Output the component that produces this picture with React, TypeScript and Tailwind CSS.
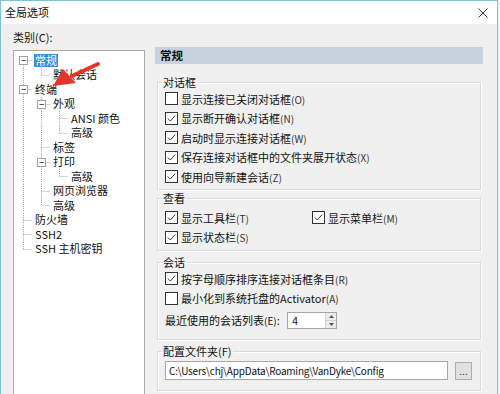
import React from "react";

type Row = {
  t: string;
  d: number;
  cont: boolean[];
  next: boolean;
  exp?: boolean;
  first?: boolean;
  sel?: boolean;
};

const rows: Row[] = [
  { t: "常规", d: 0, cont: [], next: true, exp: true, first: true, sel: true },
  { t: "默认会话", d: 1, cont: [true], next: false },
  { t: "终端", d: 0, cont: [], next: true, exp: true },
  { t: "外观", d: 1, cont: [true], next: true, exp: true },
  { t: "ANSI 颜色", d: 2, cont: [true, true], next: true },
  { t: "高级", d: 2, cont: [true, true], next: false },
  { t: "标签", d: 1, cont: [true], next: true },
  { t: "打印", d: 1, cont: [true], next: true, exp: true },
  { t: "高级", d: 2, cont: [true, true], next: false },
  { t: "网页浏览器", d: 1, cont: [true], next: true },
  { t: "高级", d: 1, cont: [true], next: false },
  { t: "防火墙", d: 0, cont: [], next: true },
  { t: "SSH2", d: 0, cont: [], next: true },
  { t: "SSH 主机密钥", d: 0, cont: [], next: false },
];

const H = 14.5;

function Guide({ line }: { line: boolean }) {
  return (
    <svg width="18" height={H} className="shrink-0">
      {line && (
        <line x1="9.5" y1="0" x2="9.5" y2={H} stroke="#a8a8a8" strokeDasharray="1 1" />
      )}
    </svg>
  );
}

function Own({ r }: { r: Row }) {
  const m = 7.5;
  return (
    <svg width="18" height={H} className="shrink-0">
      {!r.first && <line x1="9.5" y1="0" x2="9.5" y2={m} stroke="#a8a8a8" strokeDasharray="1 1" />}
      {r.next && <line x1="9.5" y1={m} x2="9.5" y2={H} stroke="#a8a8a8" strokeDasharray="1 1" />}
      <line x1="9.5" y1={m} x2="18" y2={m} stroke="#a8a8a8" strokeDasharray="1 1" />
      {r.exp && (
        <g>
          <rect x="5.5" y={m - 4} width="8" height="8" fill="#fff" stroke="#a0a0a0" />
          <line x1="7.5" y1={m} x2="12" y2={m} stroke="#555" />
        </g>
      )}
    </svg>
  );
}

function Tree() {
  return (
    <div className="relative h-[360px] w-[132px] border border-[#a9a9a9] bg-white pt-[2px]">
      {rows.map((r, i) => (
        <div key={i} className="flex h-[14.5px] items-center">
          {r.cont.map((c, j) => (
            <Guide key={j} line={c} />
          ))}
          <Own r={r} />
          <span
            className={
              "ml-[2px] whitespace-nowrap px-[1px] text-[11px] leading-[13px] " +
              (r.sel ? "bg-[#3390dc] text-white" : "text-[#111]")
            }
          >
            {r.t}
          </span>
        </div>
      ))}
      <svg className="absolute left-0 top-0" width="132" height="60" viewBox="0 0 132 60">
        <path d="M84 13 L58 25" stroke="#e3352b" strokeWidth="4" strokeLinecap="round" />
        <path d="M39 35 L49 18 L62 32 Z" fill="#e3352b" />
      </svg>
    </div>
  );
}

function Box({ on }: { on: boolean }) {
  return (
    <span className="flex h-[13px] w-[13px] shrink-0 items-center justify-center border border-[#333] bg-white">
      {on && (
        <svg width="11" height="11" viewBox="0 0 11 11">
          <path d="M1.8 5.5 L4.3 8 L9.2 2.6" fill="none" stroke="#333" strokeWidth="1" />
        </svg>
      )}
    </span>
  );
}

function Check({ on, label, k, w }: { on: boolean; label: string; k: string; w?: string }) {
  return (
    <div className={"flex h-[19.5px] items-center gap-[3px] " + (w ?? "")}>
      <Box on={on} />
      <span className="whitespace-nowrap text-[11px] text-[#111]">
        {label}
        <span className="text-[10px] text-[#333]">({k})</span>
      </span>
    </div>
  );
}

function Group({ title, className, children }: { title: string; className?: string; children: React.ReactNode }) {
  return (
    <fieldset
      className={
        "border border-[#dadada] pl-[7px] shadow-[inset_1px_1px_0_#fff,1px_1px_0_#fff] " + (className ?? "")
      }
    >
      <legend className="-ml-[3px] px-[1px] text-[11px] leading-[14px] text-[#111]">{title}</legend>
      {children}
    </fieldset>
  );
}

export default function App() {
  return (
    <div
      className="h-[394px] w-[500px] overflow-hidden bg-[#eef4f4]"
      style={{ fontFamily: '"Noto Sans CJK SC", "Noto Sans", sans-serif' }}
    >
      <div className="flex h-[394px] w-[498px] flex-col border-l border-r border-t border-[#7cc3cf] bg-[#f0f0f0]">
        <div className="flex h-[23px] shrink-0 items-center justify-between bg-white pl-[4px] pr-[9px]">
          <span className="text-[11px] text-[#111]">全局选项</span>
          <svg width="10" height="10" viewBox="0 0 10 10">
            <path d="M0.5 0.5 L9.5 9.5 M9.5 0.5 L0.5 9.5" stroke="#333" strokeWidth="1" />
          </svg>
        </div>
        <div className="flex flex-1">
          <div className="ml-[12px] flex w-[132px] flex-col">
            <span className="mt-[6px] text-[11px] leading-[14px] text-[#111]">类别(C):</span>
            <div className="mt-[6px]">
              <Tree />
            </div>
          </div>
          <div className="ml-[10px] flex w-[328px] flex-col pt-[23px]">
            <div className="flex h-[17px] items-center bg-[#c6d3df] pl-[5px] text-[11.5px] font-bold text-[#111]">
              常规
            </div>
            <div className="mx-[2px] flex flex-col">
              <Group title="对话框" className="mt-[11px] pb-[2.5px]">
                <Check on={false} label="显示连接已关闭对话框" k="O" />
                <Check on label="显示断开确认对话框" k="N" />
                <Check on label="启动时显示连接对话框" k="W" />
                <Check on label="保存连接对话框中的文件夹展开状态" k="X" />
                <Check on label="使用向导新建会话" k="Z" />
              </Group>
              <Group title="查看" className="mt-[1px] pb-[3px] pt-[3px]">
                <div className="flex">
                  <Check on label="显示工具栏" k="T" w="w-[147px]" />
                  <Check on label="显示菜单栏" k="M" />
                </div>
                <Check on label="显示状态栏" k="S" />
              </Group>
              <Group title="会话" className="mt-[4px] pb-[9px]">
                <Check on label="按字母顺序排序连接对话框条目" k="R" />
                <Check on={false} label="最小化到系统托盘的Activator" k="A" />
                <div className="mt-[3px] flex h-[19px] items-center">
                  <span className="w-[122px] whitespace-nowrap text-[11px] text-[#111]">
                    最近使用的会话列表<span className="text-[10px]">(E)</span>:
                  </span>
                  <div className="flex h-[17px] w-[50px] border border-[#a6a6a6] bg-white">
                    <span className="flex-1 pl-[4px] text-[11px] leading-[15px] text-[#111]">4</span>
                    <div className="flex w-[11px] flex-col border-l border-[#d0d0d0] bg-[#ececec]">
                      <div className="flex flex-1 items-center justify-center border-b border-[#d0d0d0]">
                        <svg width="5" height="3" viewBox="0 0 5 3"><path d="M0 3 L2.5 0 L5 3 Z" fill="#555" /></svg>
                      </div>
                      <div className="flex flex-1 items-center justify-center">
                        <svg width="5" height="3" viewBox="0 0 5 3"><path d="M0 0 L2.5 3 L5 0 Z" fill="#555" /></svg>
                      </div>
                    </div>
                  </div>
                </div>
              </Group>
              <Group title="配置文件夹(F)" className="mt-[4px] pb-[10px] pt-[3px]">
                <div className="flex h-[19px] items-center">
                  <div className="flex h-[19px] w-[283px] items-center border border-[#a6a6a6] bg-white pl-[3px] text-[10px] tracking-[-0.2px] text-[#111]">
                    C:\Users\chj\AppData\Roaming\VanDyke\Config
                  </div>
                  <div className="ml-[7px] flex h-[18px] w-[17px] items-center justify-center border border-[#adadad] bg-[#e1e1e1] text-[10px] leading-none text-[#333]">
                    ...
                  </div>
                </div>
              </Group>
            </div>
          </div>
        </div>
      </div>
    </div>
  );
}
